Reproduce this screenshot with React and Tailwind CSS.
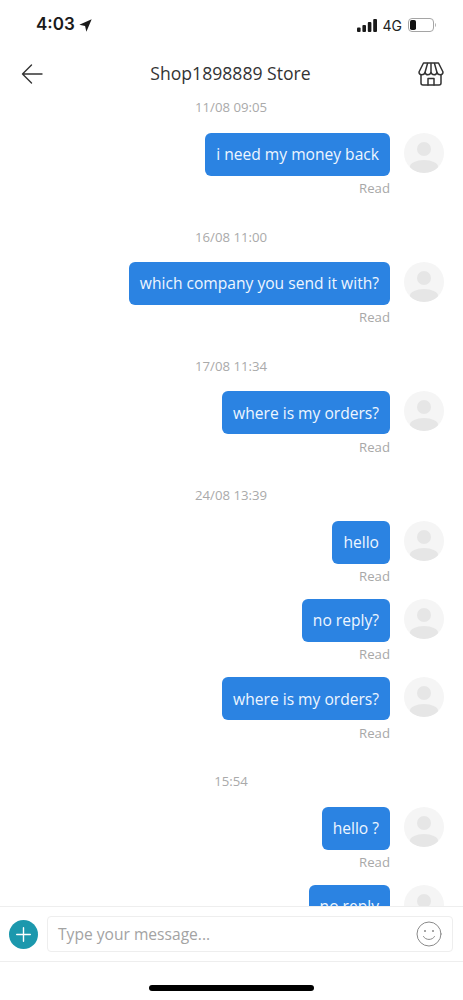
const font = { fontFamily: '"Open Sans", sans-serif' };

const groups = [
  { time: "11/08 09:05", msgs: ["i need my money back"], first: true },
  { time: "16/08 11:00", msgs: ["which company you send it with?"] },
  { time: "17/08 11:34", msgs: ["where is my orders?"] },
  { time: "24/08 13:39", msgs: ["hello", "no reply?", "where is my orders?"] },
  { time: "15:54", msgs: ["hello ?", "no reply"] },
];

function Avatar() {
  return (
    <svg width="40" height="40" viewBox="0 0 40 40" className="shrink-0">
      <defs>
        <clipPath id="avatar-clip">
          <circle cx="20" cy="20" r="20" />
        </clipPath>
      </defs>
      <circle cx="20" cy="20" r="20" fill="#f5f5f5" />
      <circle cx="20" cy="16" r="7" fill="#e6e6e6" />
      <ellipse cx="20" cy="33.5" rx="14" ry="6.5" fill="#e6e6e6" clipPath="url(#avatar-clip)" />
    </svg>
  );
}

function Message({ text }) {
  return (
    <div className="flex justify-end h-[78.3px] shrink-0 pr-[19px]">
      <div className="flex flex-col items-end">
        <div className="h-[43px] flex items-center pt-[1px] px-[11px] rounded-[6px] bg-[#2b83e2] text-[#eef6ff] text-[15.6px] whitespace-nowrap">
          {text}
        </div>
        <div className="mt-[3.4px] text-[13.2px] leading-[18px] text-[#a8a8a8]">Read</div>
      </div>
      <div className="ml-[14px]">
        <Avatar />
      </div>
    </div>
  );
}

export default function App() {
  return (
    <div className="w-[463px] h-[1000px] bg-white flex flex-col overflow-hidden text-[#333]" style={font}>
      {/* status bar */}
      <div className="h-[50px] shrink-0 flex items-center justify-between pl-[36px] pr-[26px]">
        <div className="flex items-center gap-[4px]">
          <span className="text-[17px] font-semibold text-[#1a1a1a]" style={{ fontFamily: '"Inter", sans-serif' }}>4:03</span>
          <svg width="13" height="13" viewBox="0 0 12 12">
            <path d="M11.7 .3 L.3 5.2 L5.6 6.4 L6.8 11.7 Z" fill="#1a1a1a" />
          </svg>
        </div>
        <div className="flex items-center gap-[5px]">
          <svg width="21" height="13" viewBox="0 0 21 13" className="-ml-[1px]">
            <rect x="0" y="8.5" width="3.6" height="4.5" rx="1" fill="#1a1a1a" />
            <rect x="5.4" y="6" width="3.6" height="7" rx="1" fill="#1a1a1a" />
            <rect x="10.8" y="3" width="3.6" height="10" rx="1" fill="#1a1a1a" />
            <rect x="16.2" y="0" width="3.8" height="13" rx="1" fill="#1a1a1a" />
          </svg>
          <span className="text-[14px] text-[#222]" style={{ fontFamily: '"Inter", sans-serif' }}>4G</span>
          <svg width="29" height="14" viewBox="0 0 29 14" className="ml-[1px]">
            <rect x=".5" y=".5" width="25" height="13" rx="3.5" fill="none" stroke="#a5a5a5" />
            <rect x="2" y="2" width="6" height="10" rx="1.8" fill="#111" />
            <path d="M27 5 C28.2 5.5 28.2 8.5 27 9 Z" fill="#a5a5a5" />
          </svg>
        </div>
      </div>

      {/* header */}
      <div className="h-[47px] shrink-0 flex items-center justify-between pl-[21px] pr-[19px]">
        <svg width="22" height="20" viewBox="0 0 22 20" fill="none" stroke="#333" strokeWidth="1.4" strokeLinecap="round" strokeLinejoin="round">
          <path d="M21 10 H1.5 M10.5 1 L1.5 10 L10.5 19" />
        </svg>
        <div className="text-[17.6px] text-[#333]">Shop1898889 Store</div>
        <svg width="26" height="24" viewBox="0 0 26 24" fill="none" stroke="#333" strokeWidth="1.5" strokeLinejoin="round" strokeLinecap="round">
          <path d="M5.5 1 H20.5 L25 10 C25 13.5 20 13.5 19 10.5 C18.2 13.5 14 13.5 13 10.5 C12 13.5 7.8 13.5 7 10.5 C6 13.5 1 13.5 1 10 Z" />
          <path d="M9.5 1.5 L7 10.5 M13 1.5 V10.5 M16.5 1.5 L19 10.5" />
          <path d="M3 13 V21 Q3 23 5 23 H21 Q23 23 23 21 V13" />
          <path d="M10 23 V16.5 H16 V23" />
        </svg>
      </div>

      {/* messages */}
      <div className="flex-1 min-h-0 overflow-hidden flex flex-col">
        {groups.map((g) => (
          <div key={g.time} className="flex flex-col shrink-0">
            <div className={`${g.first ? "mt-0 mb-[15.8px]" : "mt-[15.6px] mb-[15.4px]"} pr-[1px] h-[20px] leading-[20px] text-center text-[13.2px] text-[#aaa]`}>
              {g.time}
            </div>
            {g.msgs.map((m, i) => (
              <Message key={i} text={m} />
            ))}
          </div>
        ))}
      </div>

      {/* input */}
      <div className="h-[56px] shrink-0 bg-white border-y border-[#eeeeee] flex items-center pl-[9px] pr-[10px]">
        <div className="w-[29px] h-[29px] rounded-full bg-[#1c98ad] flex items-center justify-center shrink-0">
          <svg width="15" height="15" viewBox="0 0 15 15" stroke="#fff" strokeWidth="1.4" strokeLinecap="round">
            <path d="M7.5 .7 V14.3 M.7 7.5 H14.3" />
          </svg>
        </div>
        <div className="ml-[9px] flex-1 h-[36px] rounded-[4px] border border-[#eeeeee] flex items-center justify-between pl-[10px] pr-[10px]">
          <span className="text-[15.6px] pt-[2px] text-[#a3a3a3]">Type your message...</span>
          <svg width="26" height="26" viewBox="0 0 26 26" fill="none" stroke="#8a8a8a" strokeWidth="1" strokeLinecap="round">
            <circle cx="13" cy="13" r="12" />
            <circle cx="9" cy="10" r="1" fill="#8a8a8a" stroke="none" />
            <circle cx="17" cy="10" r="1" fill="#8a8a8a" stroke="none" />
            <path d="M7.5 15.5 C9.5 19.5 16.5 19.5 18.5 15.5" />
          </svg>
        </div>
      </div>

      {/* home indicator */}
      <div className="h-[38px] shrink-0 flex justify-center pt-[23px]">
        <div className="w-[165px] h-[6px] rounded-full bg-black" />
      </div>
    </div>
  );
}
